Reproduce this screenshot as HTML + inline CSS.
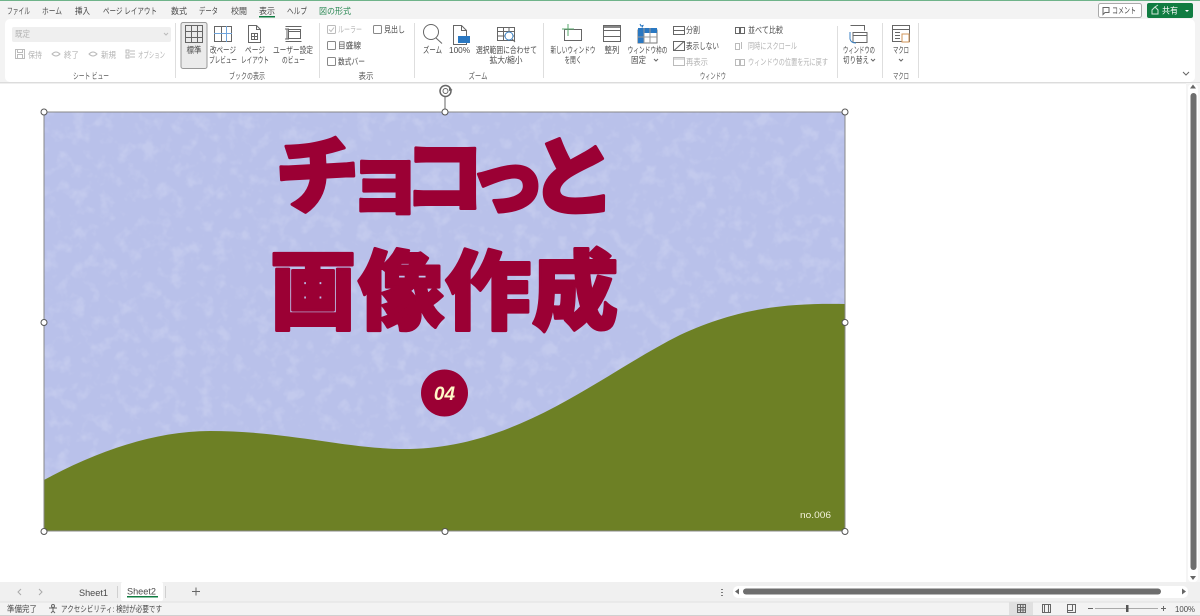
<!DOCTYPE html>
<html lang="ja"><head><meta charset="utf-8"><title>Excel</title>
<style>
html,body{margin:0;padding:0;width:1200px;height:616px;overflow:hidden;background:#fff}
svg{display:block}
text{font-family:"Liberation Sans","Noto Sans CJK JP",sans-serif;font-size:8.6px;fill:#4a4a4a}
.m{text-anchor:middle}
.d{fill:#b4b4b4}
.tab{font-size:8.8px;fill:#4a4a4a}
.g{font-size:8.6px;fill:#5a5a5a}
.big{font-family:"Noto Sans CJK JP",sans-serif;font-weight:900;fill:#9b0034;stroke:#9b0034;stroke-width:3;stroke-linejoin:round;text-anchor:middle}
.i{fill:none;stroke:#666;stroke-width:1}
.il{fill:none;stroke:#bbb;stroke-width:1}
.ck{fill:#fff;stroke:#888;stroke-width:1}
.h{fill:#fff;stroke:#555;stroke-width:1}
</style></head><body>
<svg width="1200" height="616" viewBox="0 0 1200 616" xmlns="http://www.w3.org/2000/svg">
<defs>
<filter id="tx" x="0" y="0" width="100%" height="100%">
<feTurbulence type="fractalNoise" baseFrequency="0.07" numOctaves="3" seed="5"/>
<feColorMatrix type="matrix" values="0 0 0 0 0.80  0 0 0 0 0.83  0 0 0 0 0.96  0 0 0 3.5 -1.75"/>
</filter>
<clipPath id="cp"><rect x="44" y="112" width="801" height="419"/></clipPath>
</defs>
<rect width="1200" height="616" fill="#fff"/>
<rect width="1200" height="82" fill="#f3f3f3"/>
<rect width="1200" height="1" fill="#6fb38a"/>
<g>
<text class="tab" x="7" y="14" textLength="23" lengthAdjust="spacingAndGlyphs">ファイル</text>
<text class="tab" x="42" y="14" textLength="20" lengthAdjust="spacingAndGlyphs">ホーム</text>
<text class="tab" x="75" y="14" textLength="15" lengthAdjust="spacingAndGlyphs">挿入</text>
<text class="tab" x="103" y="14" textLength="54" lengthAdjust="spacingAndGlyphs">ページ レイアウト</text>
<text class="tab" x="171" y="14" textLength="16" lengthAdjust="spacingAndGlyphs">数式</text>
<text class="tab" x="199" y="14" textLength="19" lengthAdjust="spacingAndGlyphs">データ</text>
<text class="tab" x="231" y="14" textLength="16" lengthAdjust="spacingAndGlyphs">校閲</text>
<text class="tab" x="259" y="14" textLength="16" lengthAdjust="spacingAndGlyphs">表示</text>
<rect x="259" y="16" width="16" height="1.5" fill="#107c41"/>
<text class="tab" x="287" y="14" textLength="20" lengthAdjust="spacingAndGlyphs">ヘルプ</text>
<text class="tab" x="319" y="14" textLength="32" lengthAdjust="spacingAndGlyphs" style="fill:#2f8a57">図の形式</text>
</g>
<rect x="1098.500" y="3.500" width="43" height="14" rx="2" fill="#fff" stroke="#aaa"/>
<path class="i" d="M1103 7.500h6v5h-4l-2 2z"/>
<text x="1112" y="13.500" textLength="24" lengthAdjust="spacingAndGlyphs">コメント</text>
<rect x="1147" y="3" width="46" height="15" rx="2" fill="#107c41"/>
<path d="M1152 14v-4l3-3 3 3v4zM1155 7l3-2" fill="none" stroke="#cfe6d8"/>
<text x="1162" y="13.500" textLength="16" lengthAdjust="spacingAndGlyphs" style="fill:#fff">共有</text>
<path d="M1185 10l2 2 2-2z" fill="#fff"/>
<!-- ribbon -->
<rect x="5" y="19" width="1190" height="63" rx="5" fill="#fff"/>
<rect x="0" y="82" width="1200" height="1" fill="#dcdcdc"/>
<rect x="0" y="83" width="1200" height="1" fill="#efefef"/>
<path d="M175.500 23v55M319.500 23v55M414.500 23v55M543.500 23v55M837.500 26v52M882.500 23v55M918.500 23v55" stroke="#dedede" fill="none"/>
<!-- sheet view -->
<rect x="12" y="27" width="159" height="15" rx="2" fill="#efefef"/>
<text class="d" x="15" y="37" textLength="15" lengthAdjust="spacingAndGlyphs">既定</text>
<path d="M164 33l2 2 2-2" class="il"/>
<rect x="15.500" y="49.500" width="9" height="9" class="il"/><rect x="17.500" y="49.500" width="5" height="3" class="il"/><rect x="17.500" y="54.500" width="5" height="4" class="il"/>
<text class="d" x="28" y="58" textLength="14" lengthAdjust="spacingAndGlyphs">保持</text>
<path d="M52 54q4-4 8 0q-4 4-8 0z" class="il"/>
<text class="d" x="64" y="58" textLength="15" lengthAdjust="spacingAndGlyphs">終了</text>
<path d="M89 54q4-4 8 0q-4 4-8 0z" class="il"/>
<text class="d" x="101" y="58" textLength="15" lengthAdjust="spacingAndGlyphs">新規</text>
<path d="M126 50h3v3h-3zM126 55h3v3h-3zM130 51h5M130 54h5M130 57h5" class="il"/>
<text class="d" x="138" y="58" textLength="27" lengthAdjust="spacingAndGlyphs">オプション</text>
<text class="g m" x="91" y="79" textLength="36" lengthAdjust="spacingAndGlyphs">シート ビュー</text>
<!-- book view -->
<rect x="181" y="22.500" width="26" height="46" rx="2" fill="#ebebeb" stroke="#999"/>
<path class="i" d="M185.500 25.500h17v17h-17zM185.500 31.500h17M185.500 37.500h17M191.500 25.500v17M197.500 25.500v17"/>
<text class="m" x="194" y="53" textLength="15" lengthAdjust="spacingAndGlyphs">標準</text>
<path class="i" d="M214.500 26.500h17v15h-17zM221.500 26.500v15"/><path d="M226.500 26v16M214 33.500h18" stroke="#6fa5dc" fill="none"/>
<text class="m" x="223" y="53" textLength="26" lengthAdjust="spacingAndGlyphs">改ページ</text><text class="m" x="223" y="63" textLength="28" lengthAdjust="spacingAndGlyphs">プレビュー</text>
<path class="i" d="M248.500 25.500h8l4 4v13h-12zM256.500 25.500v4h4M251.500 33.500h6v6h-6zM251.500 36.500h6M254.500 33.500v6"/>
<text class="m" x="255" y="53" textLength="20" lengthAdjust="spacingAndGlyphs">ページ</text><text class="m" x="255" y="63" textLength="28" lengthAdjust="spacingAndGlyphs">レイアウト</text>
<path class="i" d="M285.500 26.500h16M285.500 41.500h16M288.500 29.500h12v9h-12zM288.500 31.500h12M287 29v10M285 29h4M285 39h4"/>
<text class="m" x="293" y="53" textLength="40" lengthAdjust="spacingAndGlyphs">ユーザー設定</text><text class="m" x="293.500" y="63" textLength="23" lengthAdjust="spacingAndGlyphs">のビュー</text>
<text class="g m" x="247" y="79" textLength="36" lengthAdjust="spacingAndGlyphs">ブックの表示</text>
<!-- show -->
<rect x="327.500" y="25.500" width="8" height="8" rx="1" class="il"/><path d="M329 29.500l2 2 3-4" class="il"/>
<text class="d" x="338" y="32.500" textLength="24" lengthAdjust="spacingAndGlyphs">ルーラー</text>
<rect x="373.500" y="25.500" width="8" height="8" rx="1" class="ck"/><text x="384" y="32.500" textLength="21" lengthAdjust="spacingAndGlyphs">見出し</text>
<rect x="327.500" y="41.500" width="8" height="8" rx="1" class="ck"/><text x="338" y="48.500" textLength="23" lengthAdjust="spacingAndGlyphs">目盛線</text>
<rect x="327.500" y="57.500" width="8" height="8" rx="1" class="ck"/><text x="338" y="64.500" textLength="27" lengthAdjust="spacingAndGlyphs">数式バー</text>
<text class="g m" x="366" y="79" textLength="15" lengthAdjust="spacingAndGlyphs">表示</text>
<!-- zoom -->
<circle cx="431" cy="32" r="7.500" class="i"/><path class="i" d="M436 38l6 5.500"/>
<text class="m" x="432.500" y="53" textLength="19" lengthAdjust="spacingAndGlyphs">ズーム</text>
<path class="i" d="M453.500 25.500h8l5 5v14h-13zM461.500 25.500v5h5"/><rect x="458" y="36" width="12" height="7" fill="#2a78c2"/>
<text class="m" x="459.500" y="53" textLength="21" lengthAdjust="spacingAndGlyphs">100%</text>
<path class="i" d="M497.500 27.500h17v13h-17zM497.500 31.500h17M497.500 36h17M503.500 27.500v13M509 27.500v13"/><circle cx="509" cy="36" r="4" fill="#fff" stroke="#3b82c4"/><path d="M512 39l3 3" class="i"/>
<text class="m" x="506.500" y="53" textLength="61" lengthAdjust="spacingAndGlyphs">選択範囲に合わせて</text><text class="m" x="506" y="63" textLength="33" lengthAdjust="spacingAndGlyphs">拡大/縮小</text>
<text class="g m" x="478" y="79" textLength="19" lengthAdjust="spacingAndGlyphs">ズーム</text>
<!-- window -->
<path class="i" d="M564.500 29.500h17v11h-17z"/><path d="M568 24v12M562 29h12" stroke="#5aa86e" fill="none"/>
<text class="m" x="573" y="53" textLength="45" lengthAdjust="spacingAndGlyphs">新しいウィンドウ</text><text class="m" x="573" y="63" textLength="17" lengthAdjust="spacingAndGlyphs">を開く</text>
<path class="i" d="M603.500 25.500h17v16h-17zM603.500 30.500h17M603.500 36.500h17"/><path d="M604 26h16v2h-16z" fill="#888"/>
<text class="m" x="612" y="53" textLength="15" lengthAdjust="spacingAndGlyphs">整列</text>
<rect x="638" y="30" width="19" height="13" fill="#fff" stroke="#777"/><rect x="638" y="28" width="19" height="5" fill="#2a78c2"/><rect x="638" y="28" width="6" height="15" fill="#2a78c2"/><path d="M638 37h19M644 28v15M650 28v15" stroke="#999" fill="none"/><path d="M640 24l1 2 2-.5-1 2" stroke="#2a78c2" fill="none"/>
<text class="m" x="647.500" y="53" textLength="40" lengthAdjust="spacingAndGlyphs">ウィンドウ枠の</text><text x="631" y="63" textLength="15" lengthAdjust="spacingAndGlyphs">固定</text><path d="M654 59l2 2 2-2" class="i"/>
<path class="i" d="M673.500 26.500h11v8h-11zM673.500 30.500h11"/><text x="686" y="33" textLength="14" lengthAdjust="spacingAndGlyphs">分割</text>
<path class="i" d="M673.500 41.500h11v9h-11zM674 50.500l10-9"/><text x="686" y="49" textLength="33" lengthAdjust="spacingAndGlyphs">表示しない</text>
<rect x="673.500" y="57.500" width="11" height="8" class="il"/><rect x="674" y="58" width="10" height="2" fill="#ddd"/><text class="d" x="686" y="65" textLength="22" lengthAdjust="spacingAndGlyphs">再表示</text>
<path class="i" d="M735.500 27.500h4v6h-4zM740.500 27.500h4v6h-4z"/><text x="748" y="33" textLength="35" lengthAdjust="spacingAndGlyphs">並べて比較</text>
<path class="il" d="M735.500 43.500h4v6h-4zM741.500 42v7"/><text class="d" x="748" y="49" textLength="49" lengthAdjust="spacingAndGlyphs">同時にスクロール</text>
<path class="il" d="M735.500 59.500h4v6h-4zM740.500 59.500h4v6h-4z"/><text class="d" x="748" y="65" textLength="80" lengthAdjust="spacingAndGlyphs">ウィンドウの位置を元に戻す</text>
<text class="g m" x="713" y="79" textLength="26" lengthAdjust="spacingAndGlyphs">ウィンドウ</text>
<path class="i" d="M850.500 25.500h14v5M853 32.500h14v10h-14zM853 35.500h14"/><path d="M850 32v7q1 4 6 4" stroke="#3b82c4" fill="none"/>
<text class="m" x="859" y="53" textLength="32" lengthAdjust="spacingAndGlyphs">ウィンドウの</text><text x="843" y="63" textLength="26" lengthAdjust="spacingAndGlyphs">切り替え</text><path d="M871 59l2 2 2-2" class="i"/>
<path class="i" d="M892.500 25.500h17v16h-17zM892.500 29.500h17M895 32.500h5M895 35.500h5M895 38.500h5"/><path d="M902 34h7v8h-7z" fill="#fff" stroke="#d2955a"/>
<text class="m" x="901" y="53" textLength="16" lengthAdjust="spacingAndGlyphs">マクロ</text><path d="M899 59l2 2 2-2" class="i"/>
<text class="g m" x="901" y="79" textLength="16" lengthAdjust="spacingAndGlyphs">マクロ</text>
<path d="M1183 72l3 3 3-3" fill="none" stroke="#666"/>
<!-- shape -->
<g clip-path="url(#cp)">
<rect x="44" y="112" width="801" height="419" fill="#b9c1ea"/>
<rect x="44" y="112" width="801" height="419" filter="url(#tx)" opacity=".22"/>
<path d="M44 480C90 455 150 431 210 431C290 431 350 450 410 449C520 447 600 375 680 335C740 307 790 303 845 304V531H44Z" fill="#6d8025"/>
</g>
<rect x="44" y="112" width="801" height="419" fill="none" stroke="#888"/>
<g>
<text class="big" style="font-size:84px" transform="translate(319 206) rotate(-3)">チ</text>
<text class="big" style="font-size:80px" transform="translate(385 207)">ョ</text>
<text class="big" style="font-size:80px" transform="translate(444 206)">コ</text>
<text class="big" style="font-size:78px" transform="translate(507 208)">っ</text>
<text class="big" style="font-size:86px" transform="translate(573 208)">と</text>
<text class="big" style="font-size:86px" transform="translate(313 322)">画</text>
<text class="big" style="font-size:86px" transform="translate(401 322)">像</text>
<text class="big" style="font-size:86px" transform="translate(488 322)">作</text>
<text class="big" style="font-size:86px" transform="translate(575 322)">成</text>
</g>
<circle cx="444.500" cy="393" r="23.500" fill="#9b0034"/>
<text x="444.500" y="400" text-anchor="middle" style="font-size:19px;font-weight:bold;font-style:italic;fill:#fff8c8">04</text>
<text x="800" y="518" textLength="31" lengthAdjust="spacingAndGlyphs" style="font-size:9.500px;fill:#f2f0d8">no.006</text>
<path d="M445 96v16" stroke="#666"/>
<circle cx="445.500" cy="91" r="5.500" fill="none" stroke="#666" stroke-width="1.500"/><circle cx="445.500" cy="91" r="2.500" fill="none" stroke="#666"/><path d="M449 87l3.500 3-3.500 1z" fill="#666"/>
<circle class="h" cx="44" cy="112" r="3"/><circle class="h" cx="445" cy="112" r="3"/><circle class="h" cx="845" cy="112" r="3"/>
<circle class="h" cx="44" cy="322.500" r="3"/><circle class="h" cx="845" cy="322.500" r="3"/>
<circle class="h" cx="44" cy="531.500" r="3"/><circle class="h" cx="445" cy="531.500" r="3"/><circle class="h" cx="845" cy="531.500" r="3"/>
<!-- vertical scroll -->
<rect x="1186" y="83" width="14" height="499" fill="#f5f5f5"/>
<rect x="1188" y="84" width="10" height="498" rx="4" fill="#fff"/>
<path d="M1193 84.500l3 4h-6z" fill="#666"/>
<rect x="1190.500" y="93" width="6" height="477" rx="3" fill="#6e6e6e"/>
<path d="M1190 576h6l-3 4z" fill="#666"/>
<!-- sheet tabs -->
<rect x="0" y="582" width="1200" height="20" fill="#f0f0f0"/>
<path d="M21 589l-3 3 3 3M39 589l3 3-3 3" fill="none" stroke="#aaa"/>
<text x="79" y="596" textLength="29" lengthAdjust="spacingAndGlyphs" style="font-size:9.500px">Sheet1</text>
<path d="M117.500 586v12M165.500 586v12" stroke="#d0d0d0"/>
<rect x="121" y="582" width="42" height="19" rx="2" fill="#fff"/>
<text x="127" y="594.500" textLength="29" lengthAdjust="spacingAndGlyphs" style="font-size:9.500px">Sheet2</text>
<rect x="127" y="596" width="31" height="1.500" fill="#107c41"/>
<path d="M192 591.500h8M196 587.500v8" stroke="#666"/>
<path d="M722 589v1M722 592v1M722 595v1" stroke="#555" stroke-width="1.500"/>
<rect x="733" y="586" width="455" height="12" rx="5" fill="#fff"/>
<path d="M735 591.500l4-3v6z" fill="#666"/>
<rect x="743" y="588.500" width="418" height="6" rx="3" fill="#6e6e6e"/>
<path d="M1186 591.500l-4-3v6z" fill="#666"/>
<!-- status bar -->
<rect x="0" y="602" width="1200" height="14" fill="#f3f3f3"/>
<rect x="0" y="601.500" width="1200" height="1" fill="#e2e2e2"/>
<rect x="0" y="615" width="1200" height="1" fill="#d0d0d0"/>
<text x="7" y="612" textLength="30" lengthAdjust="spacingAndGlyphs">準備完了</text>
<circle cx="53" cy="606" r="1.500" class="i"/><path class="i" d="M49 608h8M53 608v3l-2 2M53 611l2 2"/>
<text x="61" y="612" textLength="101" lengthAdjust="spacingAndGlyphs">アクセシビリティ: 検討が必要です</text>
<rect x="1009" y="602" width="24" height="13" fill="#e0e0e0"/>
<path class="i" d="M1017.500 604.500h8v8h-8zM1017.500 607.500h8M1017.500 610h8M1020.500 604.500v8M1023 604.500v8"/>
<path class="i" d="M1042.500 604.500h8v8h-8zM1044.500 604.500v8M1048.500 604.500v8"/>
<path class="i" d="M1067.500 604.500h8v8h-8zM1067.500 610.500h5v-6"/>
<path d="M1088 608.500h5M1161 608.500h5M1163.500 606v5" stroke="#666"/>
<rect x="1095" y="608" width="63" height="1" fill="#aaa"/>
<rect x="1126" y="605" width="2.500" height="7" fill="#555"/>
<text x="1175" y="612" textLength="20" lengthAdjust="spacingAndGlyphs">100%</text>
</svg>
</body></html>
